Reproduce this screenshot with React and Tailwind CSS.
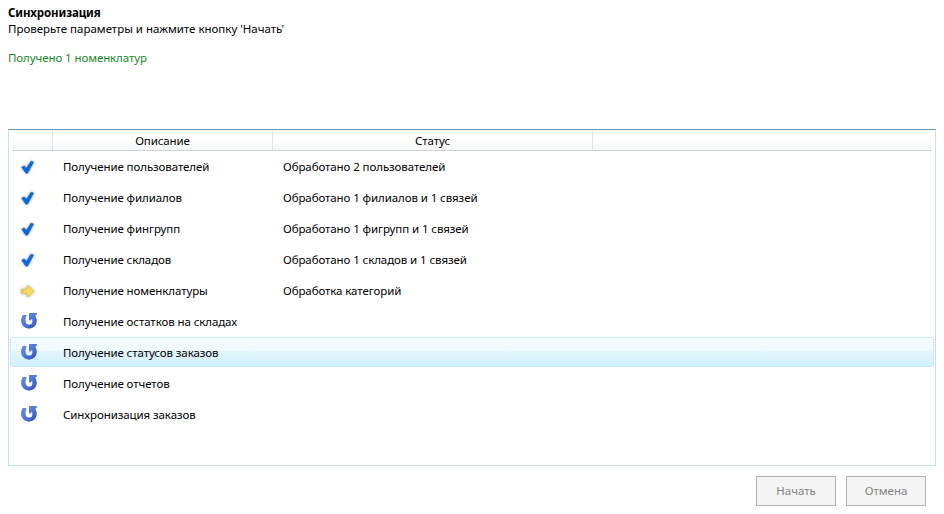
const rows = [
  ["check", "Получение пользователей", "Обработано 2 пользователей"],
  ["check", "Получение филиалов", "Обработано 1 филиалов и 1 связей"],
  ["check", "Получение фингрупп", "Обработано 1 фигрупп и 1 связей"],
  ["check", "Получение складов", "Обработано 1 складов и 1 связей"],
  ["arrow", "Получение номенклатуры", "Обработка категорий"],
  ["redo", "Получение остатков на складах", ""],
  ["redo", "Получение статусов заказов", ""],
  ["redo", "Получение отчетов", ""],
  ["redo", "Синхронизация заказов", ""],
];

function Icon({ kind }) {
  if (kind === "check")
    return (
      <svg width="20" height="20" viewBox="0 0 20 20" className="-ml-0.5 mt-[5px] drop-shadow-[0_0_1.5px_rgba(60,60,60,0.45)]">
        <path d="M3.6 10.3 6.2 8.8 8.4 11.2 13 4.1 15.7 5 9.7 16.2 7.8 16.3Z" fill="#0c68dc" stroke="#2d72c4" strokeWidth=".5" />
      </svg>
    );
  if (kind === "arrow")
    return (
      <svg width="20" height="20" viewBox="0 0 20 20" className="-ml-0.5 mt-[5px] drop-shadow-[0_0_1.5px_rgba(80,80,60,0.5)]">
        <path d="M3.2 8.3H4.6V12.5H3.2ZM5.3 8.1H9V5L10.3 4.7 16 10.3 10.4 15.7 9 15.3V12.6H5.3Z" fill="#fbd85c" stroke="#e2bd50" strokeWidth=".6" />
      </svg>
    );
  return (
    <svg width="18" height="18" viewBox="0 0 18 18" className="mt-1 drop-shadow-[0_0_.5px_rgba(50,70,130,0.5)]">
      <defs>
        <linearGradient id="redo" x1="0" y1="0" x2="1" y2="1">
          <stop offset="0" stopColor="#6f91dd" />
          <stop offset=".5" stopColor="#4e78d8" />
          <stop offset="1" stopColor="#2d50b4" />
        </linearGradient>
      </defs>
      <path d="M9 2H16.8V3.2L15.1 4.8C18.6 10 15.8 17.5 9.2 17.5 1.4 17.5-.6 9.5 2.9 4H6.3V5.3C4.2 8.8 5.6 13.8 9.1 13.8 12.3 13.8 13.2 10.4 12.1 7.6L10.6 9.2H9Z" fill="url(#redo)" />
    </svg>
  );
}

export default function App() {
  return (
    <main className="flex h-[514px] w-[944px] flex-col bg-white pl-2 font-['Noto_Sans','Segoe_UI',sans-serif] text-[11.5px] leading-4 tracking-[-0.09px] text-black">
      <h1 className="mt-[5px] whitespace-nowrap font-bold tracking-[-0.12px]"><span>Синхронизация</span></h1>
      <p className="whitespace-nowrap tracking-[-0.01px]"><span>Проверьте параметры и нажмите кнопку 'Начать'</span></p>
      <p className="mt-[13px] whitespace-nowrap text-[#168a28]"><span>Получено 1 номенклатур</span></p>
      <section className="mt-[63px] h-[337px] w-[928px] border border-[#c5dfeb] border-t-[#5f93b8] px-px pt-px">
        <div className="mx-0.5 grid h-5 grid-cols-[41px_220px_320px_1fr] border-b border-[#cfd3d6] border-t border-t-[#f0f2f3] bg-linear-to-b from-white from-40% to-[#f5f6f7] text-center leading-[18px]">
          <div className="border-r border-[#dfe3e6]" />
          <div className="border-r border-[#dfe3e6]">Описание</div>
          <div className="border-r border-[#dfe3e6]">Статус</div>
          <div />
        </div>
        {rows.map(([kind, name, status], i) => (
          <div
            key={name}
            className={`mb-px grid h-[30px] grid-cols-[43px_220px_1fr] rounded-[2px] border pl-[9px] ${
              i === 6
                ? "border-[#c4ebfb] bg-[linear-gradient(to_bottom,#f8fcff_0%,#eff9fe_45%,#e2f5fd_46%,#d3f0fd_100%)]"
                : "border-transparent"
            }`}
          >
            <Icon kind={kind} />
            <span className="mt-[7px] justify-self-start whitespace-nowrap">{name}</span>
            <span className="mt-[7px] justify-self-start whitespace-nowrap">{status}</span>
          </div>
        ))}
      </section>
      <footer className="mt-[10px] flex w-[918px] justify-end gap-[10px] text-[#838383]">
        <button className="h-[30px] w-20 border border-[#adb2b5] bg-[#f4f4f4] tracking-normal">Начать</button>
        <button className="h-[30px] w-20 border border-[#adb2b5] bg-[#f4f4f4] tracking-normal">Отмена</button>
      </footer>
    </main>
  );
}
